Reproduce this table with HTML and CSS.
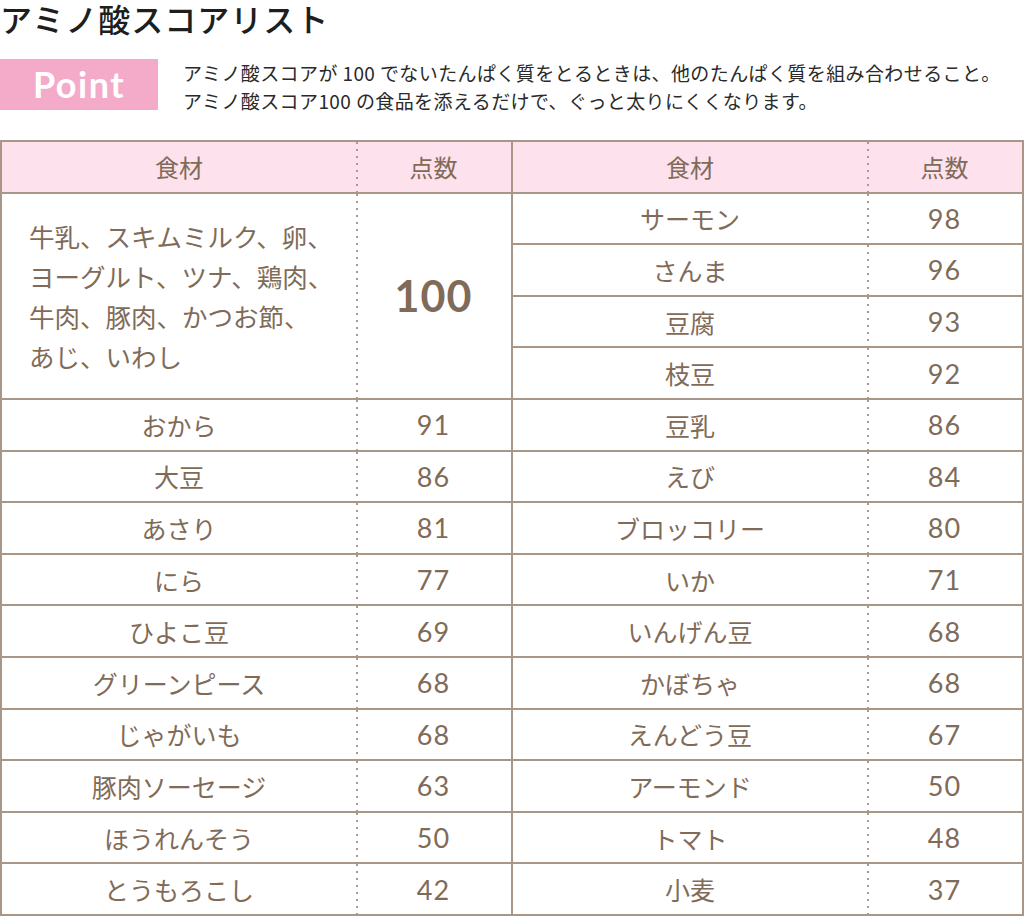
FILE: index.html
```html
<!DOCTYPE html>
<html lang="ja">
<head>
<meta charset="utf-8">
<title>アミノ酸スコアリスト</title>
<link rel="stylesheet" href="styles.css">
</head>
<body>
<h1 class="title">アミノ酸スコアリスト</h1>
<div class="point">
  <div class="badge">Point</div>
  <p class="point-text">アミノ酸スコアが 100 でないたんぱく質をとるときは、他のたんぱく質を組み合わせること。<br>アミノ酸スコア100 の食品を添えるだけで、ぐっと太りにくくなります。</p>
</div>
<table class="score">
  <colgroup>
    <col class="c-food"><col class="c-num"><col class="c-food"><col class="c-num">
  </colgroup>
  <thead>
    <tr><th class="food">食材</th><th class="num">点数</th><th class="food">食材</th><th class="num">点数</th></tr>
  </thead>
  <tbody>
    <tr>
      <td class="food multi" rowspan="4">牛乳、スキムミルク、卵、<br>ヨーグルト、ツナ、鶏肉、<br>牛肉、豚肉、かつお節、<br>あじ、いわし</td>
      <td class="num big" rowspan="4">100</td>
      <td class="food">サーモン</td><td class="num">98</td>
    </tr>
    <tr><td class="food">さんま</td><td class="num">96</td></tr>
    <tr><td class="food">豆腐</td><td class="num">93</td></tr>
    <tr><td class="food">枝豆</td><td class="num">92</td></tr>
    <tr><td class="food">おから</td><td class="num">91</td><td class="food">豆乳</td><td class="num">86</td></tr>
    <tr><td class="food">大豆</td><td class="num">86</td><td class="food">えび</td><td class="num">84</td></tr>
    <tr><td class="food">あさり</td><td class="num">81</td><td class="food">ブロッコリー</td><td class="num">80</td></tr>
    <tr><td class="food">にら</td><td class="num">77</td><td class="food">いか</td><td class="num">71</td></tr>
    <tr><td class="food">ひよこ豆</td><td class="num">69</td><td class="food">いんげん豆</td><td class="num">68</td></tr>
    <tr><td class="food">グリーンピース</td><td class="num">68</td><td class="food">かぼちゃ</td><td class="num">68</td></tr>
    <tr><td class="food">じゃがいも</td><td class="num">68</td><td class="food">えんどう豆</td><td class="num">67</td></tr>
    <tr><td class="food">豚肉ソーセージ</td><td class="num">63</td><td class="food">アーモンド</td><td class="num">50</td></tr>
    <tr><td class="food">ほうれんそう</td><td class="num">50</td><td class="food">トマト</td><td class="num">48</td></tr>
    <tr><td class="food">とうもろこし</td><td class="num">42</td><td class="food">小麦</td><td class="num">37</td></tr>
  </tbody>
</table>
</body>
</html>
```
FILE: styles.css
```css
html, body {
  margin: 0;
  padding: 0;
  background: #ffffff;
}

body {
  font-family: "Noto Sans CJK JP", sans-serif;
  color: #222;
  width: 1024px;
}

.title {
  margin: 0;
  font-size: 32px;
  font-weight: 500;
  line-height: 36px;
  color: #1e1e1e;
  letter-spacing: 1px;
}

.point {
  display: flex;
  align-items: flex-start;
  margin-top: 23px;
  gap: 25px;
}

.badge {
  width: 158px;
  height: 51px;
  background: #f3abc9;
  color: #ffffff;
  font-family: "Lato", "Noto Sans", sans-serif;
  font-weight: 700;
  font-size: 36px;
  line-height: 51px;
  text-align: center;
  letter-spacing: 1.5px;
  flex: none;
}

.point-text {
  margin: 0;
  font-size: 19px;
  line-height: 28px;
  color: #2a2a2a;
  white-space: nowrap;
  letter-spacing: 0.4px;
}

.score {
  margin-top: 25px;
  border-collapse: collapse;
  width: 1023px;
  table-layout: fixed;
  border: 2px solid #a89687;
  color: #7f6b58;
}

.c-food { width: 355px; }
.c-num { width: 156px; }

.score th, .score td {
  height: 49.6px;
  padding: 0;
  text-align: center;
  vertical-align: middle;
  border-top: 2px solid #a89687;
  border-bottom: 2px solid #a89687;
  font-size: 25px;
  font-weight: 400;
  white-space: nowrap;
}

.score thead th {
  background-color: #fde1ec;
  font-size: 24px;
}

.score .food {
  border-left: 2px solid #a89687;
}

.score .num {
  border-left: none;
  font-family: "Lato", "Noto Sans CJK JP", sans-serif;
  font-size: 27px;
  letter-spacing: 1px;
  background-image: linear-gradient(#a89a8e 2px, transparent 2px);
  background-size: 2px 7px;
  background-repeat: repeat-y;
  background-position: left top;
}

.score thead .num {
  font-family: "Noto Sans CJK JP", sans-serif;
  font-size: 24px;
  letter-spacing: 0;
}

.score .multi {
  text-align: left;
  padding-left: 27px;
  line-height: 40px;
  font-size: 25.5px;
}

.score .big {
  font-size: 43px;
  font-weight: 700;
  letter-spacing: 1px;
}
```
